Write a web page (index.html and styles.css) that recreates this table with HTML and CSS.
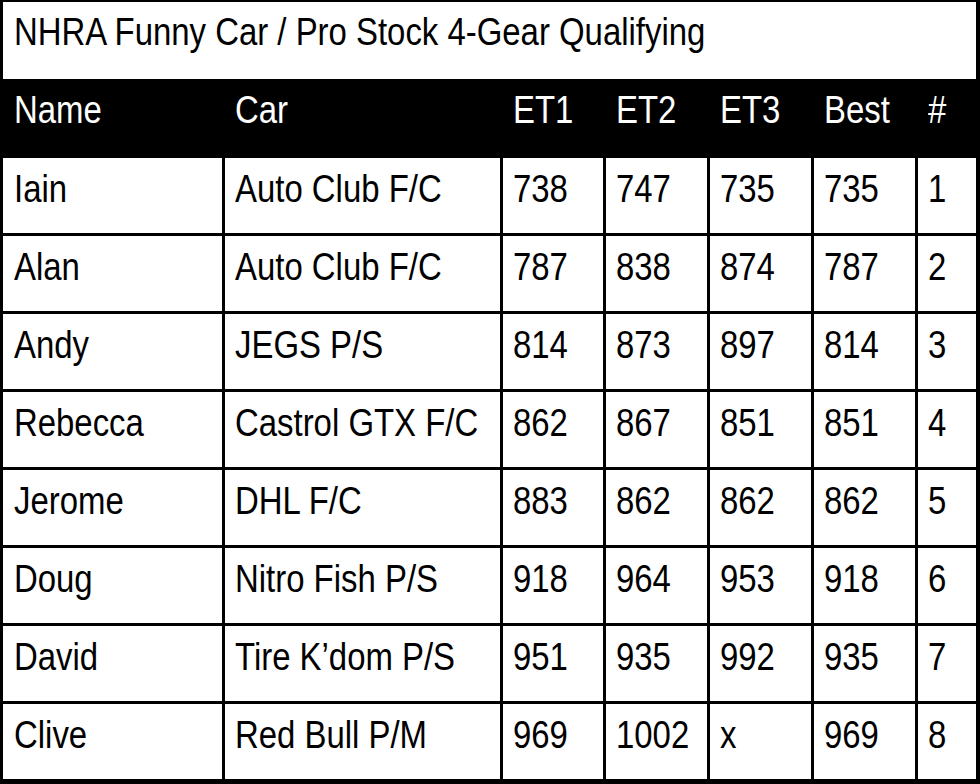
FILE: index.html
```html
<!DOCTYPE html>
<html>
<head>
<meta charset="utf-8">
<link rel="stylesheet" href="styles.css">
<title>NHRA Qualifying</title>
</head>
<body>
<div class="sheet">
  <div class="title"><span class="t">NHRA Funny Car / Pro Stock 4-Gear Qualifying</span></div>
  <div class="grid">
    <div class="hd first"><span class="t">Name</span></div>
    <div class="hd"><span class="t">Car</span></div>
    <div class="hd"><span class="t">ET1</span></div>
    <div class="hd"><span class="t">ET2</span></div>
    <div class="hd"><span class="t">ET3</span></div>
    <div class="hd"><span class="t">Best</span></div>
    <div class="hd"><span class="t">#</span></div>

    <div class="c first"><span class="t">Iain</span></div>
    <div class="c"><span class="t">Auto Club F/C</span></div>
    <div class="c"><span class="t">738</span></div>
    <div class="c"><span class="t">747</span></div>
    <div class="c"><span class="t">735</span></div>
    <div class="c"><span class="t">735</span></div>
    <div class="c"><span class="t">1</span></div>

    <div class="c first"><span class="t">Alan</span></div>
    <div class="c"><span class="t">Auto Club F/C</span></div>
    <div class="c"><span class="t">787</span></div>
    <div class="c"><span class="t">838</span></div>
    <div class="c"><span class="t">874</span></div>
    <div class="c"><span class="t">787</span></div>
    <div class="c"><span class="t">2</span></div>

    <div class="c first"><span class="t">Andy</span></div>
    <div class="c"><span class="t">JEGS P/S</span></div>
    <div class="c"><span class="t">814</span></div>
    <div class="c"><span class="t">873</span></div>
    <div class="c"><span class="t">897</span></div>
    <div class="c"><span class="t">814</span></div>
    <div class="c"><span class="t">3</span></div>

    <div class="c first"><span class="t">Rebecca</span></div>
    <div class="c"><span class="t">Castrol GTX F/C</span></div>
    <div class="c"><span class="t">862</span></div>
    <div class="c"><span class="t">867</span></div>
    <div class="c"><span class="t">851</span></div>
    <div class="c"><span class="t">851</span></div>
    <div class="c"><span class="t">4</span></div>

    <div class="c first"><span class="t">Jerome</span></div>
    <div class="c"><span class="t">DHL F/C</span></div>
    <div class="c"><span class="t">883</span></div>
    <div class="c"><span class="t">862</span></div>
    <div class="c"><span class="t">862</span></div>
    <div class="c"><span class="t">862</span></div>
    <div class="c"><span class="t">5</span></div>

    <div class="c first"><span class="t">Doug</span></div>
    <div class="c"><span class="t">Nitro Fish P/S</span></div>
    <div class="c"><span class="t">918</span></div>
    <div class="c"><span class="t">964</span></div>
    <div class="c"><span class="t">953</span></div>
    <div class="c"><span class="t">918</span></div>
    <div class="c"><span class="t">6</span></div>

    <div class="c first"><span class="t">David</span></div>
    <div class="c"><span class="t">Tire K’dom P/S</span></div>
    <div class="c"><span class="t">951</span></div>
    <div class="c"><span class="t">935</span></div>
    <div class="c"><span class="t">992</span></div>
    <div class="c"><span class="t">935</span></div>
    <div class="c"><span class="t">7</span></div>

    <div class="c first"><span class="t">Clive</span></div>
    <div class="c"><span class="t">Red Bull P/M</span></div>
    <div class="c"><span class="t">969</span></div>
    <div class="c"><span class="t">1002</span></div>
    <div class="c"><span class="t">x</span></div>
    <div class="c"><span class="t">969</span></div>
    <div class="c"><span class="t">8</span></div>
  </div>
</div>
</body>
</html>
```

FILE: styles.css
```css
html, body {
  margin: 0;
  padding: 0;
  background: #fff;
}

.sheet {
  width: 980px;
  height: 784px;
  font-family: "Liberation Sans", Arial, sans-serif;
  font-size: 38px;
  line-height: 38px;
  color: #000;
  overflow: hidden;
}

.t {
  display: inline-block;
  white-space: nowrap;
  transform: scaleX(0.866);
  transform-origin: left top;
}

.title {
  box-sizing: border-box;
  height: 79px;
  border-top: 2px solid #000;
  border-left: 3px solid #000;
  border-right: 4px solid #000;
  padding: 11px 0 0 11px;
  background: #fff;
}

.grid {
  display: grid;
  grid-template-columns: 219px 275px 100px 101px 101px 101px 58px;
  grid-template-rows: 76px repeat(8, 75px);
  column-gap: 3px;
  row-gap: 3px;
  padding: 0 4px 5px 3px;
  background: #000;
}

.hd {
  background: #000;
  color: #fff;
  padding: 12px 0 0 10px;
  overflow: hidden;
}

.c {
  background: #fff;
  padding: 12px 0 0 10px;
  overflow: hidden;
}

.first {
  padding-left: 11px;
}
```
